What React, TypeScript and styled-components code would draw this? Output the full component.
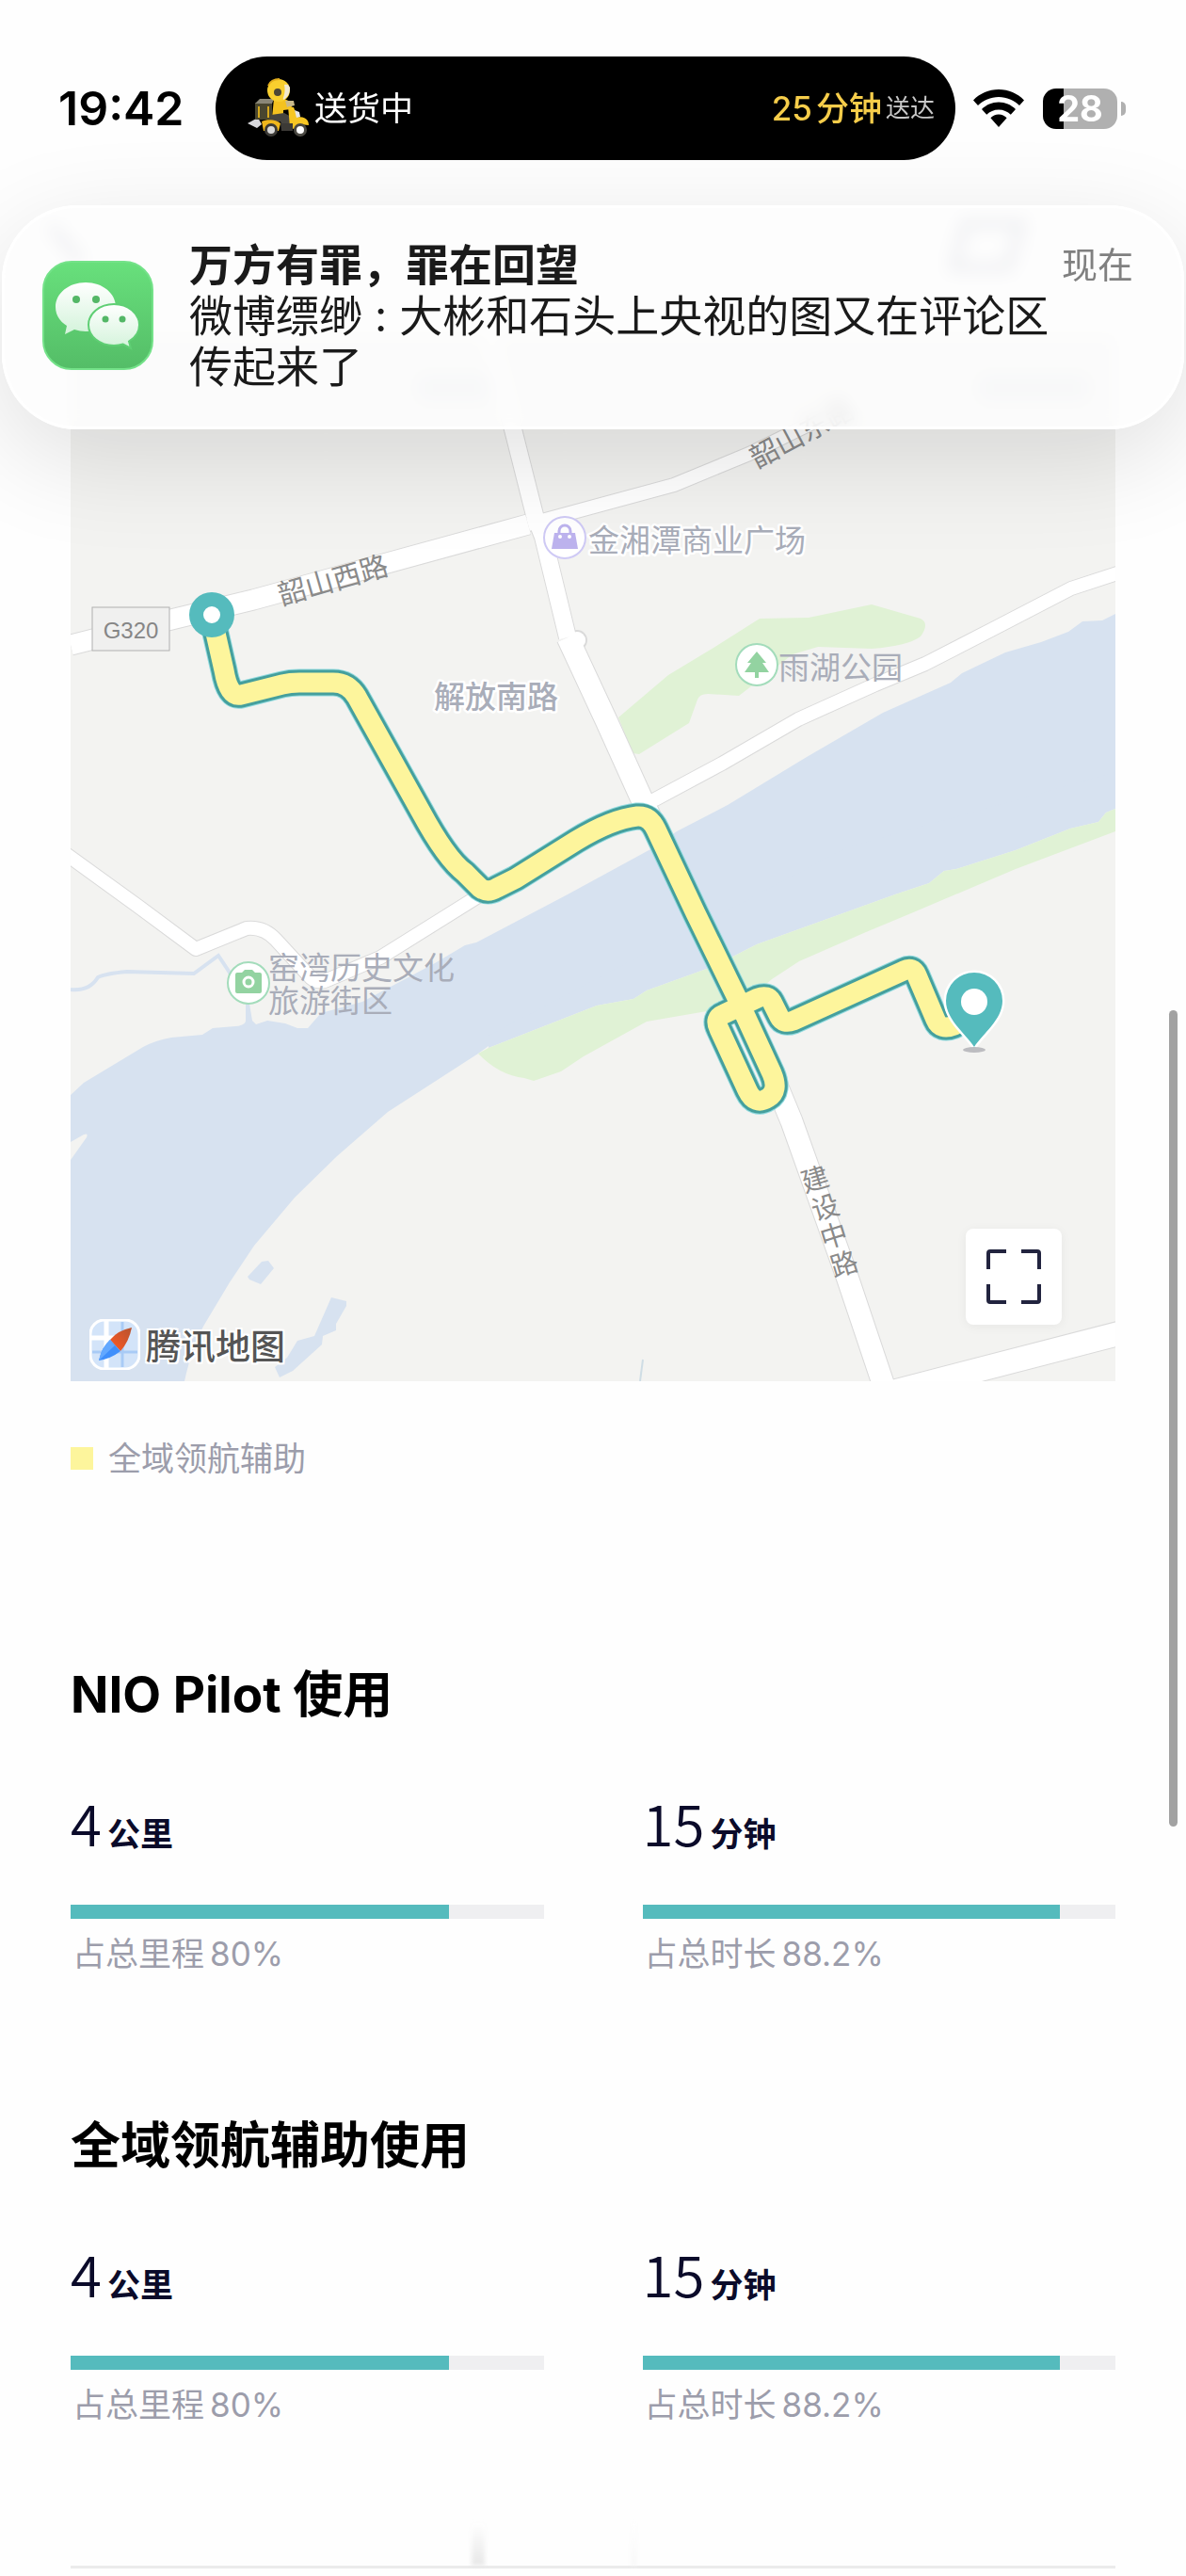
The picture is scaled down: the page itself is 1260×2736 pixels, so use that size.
import React from "react";
import styled, { createGlobalStyle } from "styled-components";

const latin = `Inter, "Noto Sans CJK SC", sans-serif`;
const han = `"Noto Sans CJK SC", sans-serif`;

const GlobalStyle = createGlobalStyle`
  * { box-sizing: border-box; }
  body { margin: 0; background: #fefefe; font-family: ${latin}; color: #000; }
  h1, h2, p { margin: 0; }
`;

const Screen = styled.div`
  position: relative;
  min-height: 100vh;
  display: flex;
  flex-direction: column;
  overflow: hidden;
  background: #fefefe;
`;

/* ---------- status bar ---------- */

const StatusBar = styled.header`
  position: relative;
  z-index: 3;
  height: 230px;
  padding: 0 64px 0 62px;
  display: flex;
  align-items: center;
`;

const Clock = styled.time`
  width: 167px;
  flex: none;
  font-size: 50px;
  line-height: 60px;
  font-weight: 600;
`;

const Island = styled.div`
  flex: 1;
  height: 110px;
  padding: 0 22px 0 33px;
  border-radius: 55px;
  background: #000;
  display: flex;
  align-items: center;
  font-size: 35px;
  line-height: 40px;
  color: #fff;
`;

const IslandLabel = styled.span`
  margin-left: 4px;
  flex: 1;
`;

const Eta = styled.span`
  display: flex;
  align-items: center;
  gap: 4px;
  font-weight: 500;
  color: #f6cd4a;
`;

const EtaNote = styled.span`
  font-size: 26px;
  font-weight: 400;
  color: #c8c8c8;
`;

const StatusIcons = styled.div`
  margin-left: 19px;
  display: flex;
  align-items: center;
  gap: 20px;
`;

const Battery = styled.div`
  display: flex;
  align-items: center;
  gap: 4px;
`;

const BatteryBody = styled.div`
  width: 79px;
  height: 43px;
  border-radius: 14px;
  background: linear-gradient(90deg, #000 0 22px, #b0b0b0 22px);
  color: #fff;
  font-size: 38px;
  line-height: 43px;
  font-weight: 700;
  text-align: center;
`;

const BatteryTip = styled.div`
  width: 5px;
  height: 15px;
  border-radius: 0 8px 8px 0;
  background: #b0b0b0;
`;

/* ---------- page bar behind the banner ---------- */

const PageBar = styled.div`
  height: 127px;
  padding: 0 165px 0 48px;
  display: flex;
  justify-content: space-between;
  align-items: flex-start;
`;

/* ---------- notification ---------- */

const Banner = styled.aside`
  position: absolute;
  z-index: 2;
  top: 218px;
  left: 2px;
  right: 2px;
  padding: 33px 51px 37px 40px;
  display: flex;
  align-items: center;
  gap: 38px;
  border: 3px solid #fff;
  border-radius: 80px;
  background: rgba(252, 252, 252, 0.82);
  backdrop-filter: blur(9px);
  box-shadow: 0 30px 110px rgba(0, 0, 0, 0.12);
  color: #1a1a1a;
  font-size: 46px;
  line-height: 54px;
`;

const BannerText = styled.div`
  flex: 1;
`;

const BannerHead = styled.div`
  height: 54px;
  display: flex;
  justify-content: space-between;
  align-items: center;
`;

const BannerTitle = styled.h1`
  font-size: 46px;
  line-height: 54px;
  font-weight: 600;
`;

const BannerTime = styled.time`
  font-size: 38px;
  color: #808080;
`;

const BannerBody = styled.p`
  height: 108px;
  padding-right: 60px;
`;

/* ---------- content ---------- */

const Content = styled.main`
  padding: 0 75px 8px;
`;

const MapBox = styled.div`
  position: relative;
  aspect-ratio: 1;
  overflow: hidden;
`;

const MapSvg = styled.svg`
  display: block;
  width: 100%;
  height: 100%;
  background: #f3f3f1;
  font-family: ${han};
`;

const MapBrand = styled.div`
  position: absolute;
  left: 20px;
  bottom: 12px;
  display: flex;
  align-items: center;
  gap: 6px;
  font-family: ${han};
  font-size: 37px;
  line-height: 54px;
  font-weight: 500;
  color: #555;
  text-shadow: 2px 0 #fff, -2px 0 #fff, 0 2px #fff, 0 -2px #fff, 2px 2px #fff, -2px -2px #fff, 2px -2px #fff, -2px 2px #fff;
`;

const ExpandButton = styled.button`
  position: absolute;
  right: 57px;
  bottom: 60px;
  width: 102px;
  height: 102px;
  padding: 0;
  display: grid;
  place-items: center;
  border: 0;
  border-radius: 8px;
  background: #fff;
  box-shadow: 0 2px 12px rgba(0, 0, 0, 0.05);
`;

const Legend = styled.div`
  margin-top: 62px;
  display: flex;
  align-items: center;
  gap: 16px;
  font-size: 35px;
  line-height: 40px;
  color: #9c9dab;
`;

const Swatch = styled.span`
  width: 24px;
  height: 24px;
  background: #fdf59c;
`;

const Section = styled.section<{ $gap: number }>`
  margin-top: ${(p) => p.$gap}px;
`;

const SectionTitle = styled.h2`
  height: 60px;
  font-size: 53px;
  line-height: 62px;
  font-weight: 700;
`;

const Stats = styled.div`
  margin-top: 76px;
  display: grid;
  grid-template-columns: 1fr 1fr;
  column-gap: 105px;
`;

const Value = styled.div`
  height: 60px;
  display: flex;
  align-items: baseline;
  gap: 6px;
  font-family: ${han};
  line-height: 60px;
  color: #0b0b2a;
`;

const Amount = styled.span`
  font-size: 60px;
  font-weight: 350;
`;

const Unit = styled.span`
  font-size: 35px;
  font-weight: 700;
`;

const Track = styled.div`
  height: 15px;
  margin: 58px 0 16px;
  background: #efeff1;
`;

const Fill = styled.div`
  height: 100%;
  background: #55bbbd;
`;

const Caption = styled.p`
  height: 40px;
  padding-left: 2px;
  display: flex;
  gap: 6px;
  font-size: 35px;
  line-height: 42px;
  color: #9c9dab;
`;

const NextCard = styled.div`
  margin-top: 107px;
  height: 48px;
  padding-left: 426px;
  display: flex;
  gap: 156px;
  border-bottom: 3px solid #ebebeb;
`;

const Streak = styled.span<{ $w: number; $c: string }>`
  width: ${(p) => p.$w}px;
  background: linear-gradient(#fefefe, ${(p) => p.$c});
  filter: blur(2px);
`;

const ScrollThumb = styled.div`
  position: absolute;
  z-index: 1;
  top: 1073px;
  right: 9px;
  width: 9px;
  height: 867px;
  border-radius: 5px;
  background: #a2a2a2;
`;

/* ---------- icons ---------- */

const Rider = () => (
  <svg width="68" height="64" viewBox="0 0 68 64" aria-hidden="true">
    <path d="M1 48l11-6 4 7-5 4z" fill="#d8d8dc" />
    <rect x="9" y="26" width="18" height="18" rx="1" fill="#49462f" />
    <path d="M10 26l4-4h15l-2 5H9z" fill="#8a8778" />
    <path d="M13 30v12M23 30v12" stroke="#d5a91f" strokeWidth="2" />
    <path d="M29 22h11l9 4-2 7-8 1v8H27z" fill="#f4c21f" />
    <path d="M41 24h9l1 5-8 2z" fill="#c9b98a" />
    <path d="M26 39l14-2 9 5-2 10h-9l-2-6-12 2z" fill="#47453f" />
    <path d="M16 46c6-3 16-2 20 2l-2 8H18z" fill="#efb61c" />
    <path d="M44 30l6 1 4 10c8 0 12 3 12 9l-10-1-6 5-4-2z" fill="#f7c623" />
    <path d="M51 34l5 2 1 5-4 1z" fill="#e6e6e6" />
    <path d="M36 48h13v8H37z" fill="#3c3a36" />
    <circle cx="26" cy="55" r="7" fill="#3c3a36" />
    <circle cx="26" cy="55" r="4" fill="#d9d9d9" />
    <circle cx="57" cy="55" r="7" fill="#4a4842" />
    <circle cx="57" cy="55" r="4" fill="#fff" />
    <circle cx="34" cy="13" r="12" fill="#f9cf2e" />
    <path d="M40 7c3-1 5 0 6 3 0 7-3 11-7 13-1-3 3-6 1-16z" fill="#f2ead2" />
    <circle cx="33" cy="15" r="4" fill="#4c4636" />
    <path d="M23 8c2-5 7-7 12-7" stroke="#e2ad1d" strokeWidth="2" fill="none" />
  </svg>
);

const Wifi = () => (
  <svg width="54" height="40" viewBox="0 0 54 40" aria-hidden="true">
    <path d="M27 0C16.500 0 7 4.300 0 11.400l5 5.700C10.700 11.500 18.400 8 27 8s16.300 3.500 22 9.100l5-5.700C47 4.300 37.500 0 27 0z" />
    <path d="M27 13.500c-7 0-13.300 2.900-18 7.500l5.200 5.800c3.400-3.300 7.800-5.300 12.800-5.300s9.400 2 12.800 5.300L45 21c-4.700-4.600-11-7.500-18-7.500z" />
    <path d="M27 26.500c-3.400 0-6.400 1.500-8.600 3.800L27 40l8.600-9.700c-2.200-2.300-5.200-3.800-8.600-3.800z" />
  </svg>
);

const WeChat = () => (
  <svg width="118" height="116" viewBox="0 0 118 116" role="img" aria-label="微信">
    <defs>
      <linearGradient id="wg" x1="0" y1="0" x2="0" y2="1">
        <stop offset="0" stopColor="#68e07c" />
        <stop offset="1" stopColor="#54bd67" />
      </linearGradient>
      <linearGradient id="wb" x1="0" y1="0" x2="0" y2="1">
        <stop offset="0" stopColor="#ffffff" />
        <stop offset="1" stopColor="#d3f3da" />
      </linearGradient>
    </defs>
    <rect x="1" y="1" width="116" height="114" rx="30" fill="url(#wg)" stroke="#74e289" strokeWidth="2" />
    <path d="M46 23C28 23 14 34.500 14 49c0 8.500 4.500 15.500 12 20l-2 9 10-5c4 1.300 8 2 12 2 18 0 32-11.500 32-26S64 23 46 23z" fill="url(#wb)" />
    <path d="M76 46c-15 0-27 9.800-27 22s12 22 27 22c3.500 0 6.800-.5 9.800-1.500L94 93l-2-7.500c7-4 11-10.300 11-17.500 0-12.200-12-22-27-22z" fill="url(#wb)" stroke="#5fcf74" strokeWidth="2" />
    <g fill="#53b766">
      <circle cx="36" cy="41" r="4" />
      <circle cx="57" cy="41" r="4" />
      <circle cx="67" cy="62" r="3.500" />
      <circle cx="85" cy="62" r="3.500" />
    </g>
  </svg>
);

const Expand = () => (
  <svg width="58" height="58" viewBox="0 0 58 58" fill="none" stroke="#22243f" strokeWidth="4" aria-hidden="true">
    <path d="M2 21V4q0-2 2-2h17M37 2h17q2 0 2 2v17M56 37v17q0 2-2 2H37M21 56H4q-2 0-2-2V37" />
  </svg>
);

const BrandIcon = () => (
  <svg width="54" height="54" viewBox="0 0 54 54" aria-hidden="true">
    <defs>
      <linearGradient id="nr" x1="1" y1="0" x2="0" y2="1">
        <stop offset="0" stopColor="#b5532f" />
        <stop offset="1" stopColor="#ff5a24" />
      </linearGradient>
    </defs>
    <rect x="1" y="1" width="52" height="52" rx="15" fill="#d3e4f9" stroke="#fff" strokeWidth="3" />
    <path d="M18 2v50M2 20h25" stroke="#fff" strokeWidth="5" />
    <path d="M35 3v48M3 35h48" stroke="#a9cbf6" strokeWidth="3" />
    <path d="M45 9Q30 12 22 22l11 12Q42 24 45 9z" fill="url(#nr)" />
    <path d="M10 44Q13 30 22 22l11 12Q23 42 10 44z" fill="#3f8ffb" />
    <path d="M10 44Q13 30 22 22l5 6z" fill="#62a8ff" />
  </svg>
);

/* ---------- map ---------- */

const wide = "M75 685L186 657L269 637L561 557";
const wideEast = "M561 557L620 541L716 515L796 482L920 421";
const northSouth = "M520 357L568 547L577 570L603 677";
const bridge = "M603 677L643 763L681 847L739 970L785 1064L824 1150L841 1191L900 1356L941 1478";
const riverside = "M685 853L696 849L767 811L848 764L930 727L983 705L1055 668L1138 625L1190 608";
const oldTown = "M70 907L146 962L208 1008L262 986Q280 984 293 998L328 1036Q334 1044 345 1042L404 1017L508 952L542 935L628 887L681 860";
const southEast = "M935 1482L1190 1416";

const roads: [string, number][] = [
  [wideEast, 14],
  [oldTown, 14],
  [riverside, 14],
  [northSouth, 18],
  [wide, 21],
  [bridge, 23],
  [southEast, 25],
];

const route =
  "M228 668L238 712Q243 741 256 738L300 727Q308 725 318 725L354 725Q370 725 379 740L447 862Q474 912 494 927L510 943Q518 949 528 943L548 933L612 893Q650 870 677 867Q690 866 697 881L739 970L785 1064L820 1140Q828 1159 816 1166Q802 1175 794 1158L764 1093Q758 1081 769 1077L805 1060Q816 1056 820 1064L828 1080Q832 1088 843 1084L960 1031Q970 1026 974 1036L994 1083Q999 1095 1014 1089";

const water =
  "M1185 652L1171 659L1150 660L1135 671L1106 682L1068 693L1022 715L1010 725L938 757L857 804L773 855L719 883L693 901L603 950L506 1001L494 1004L462 1023L385 1064L341 1076L327 1092L316 1092L303 1087L284 1084L272 1088L268 1084L264 1060L261 1060L261 1084Q261 1089 250 1090L226 1092L215 1099L182 1102Q165 1105 152 1112L89 1150L75 1163V1213L89 1205Q94 1203 92 1208L75 1232V1467H196Q204 1430 217 1407L244 1362L270 1323L313 1272L358 1228L412 1181L508 1119L534 1100L640 1060L673 1040L700 1030L804 990L951 935L1003 915L1137 870L1185 855Z";

const southBank =
  "M508 1119L519 1113L634 1068L673 1061L687 1052L759 1026L804 1003L951 950L987 938L1003 925L1016 923L1079 903L1137 880L1167 873L1175 863L1185 859V883L1079 923L968 970L920 990L849 1021L820 1040L790 1066L751 1074L687 1085L620 1122L596 1138L567 1148L557 1145Q530 1142 508 1119Z";

/* strip of river between the channel outline and the planted bank */
const channelEdge =
  "M519 1100V1113L634 1068L673 1061L687 1052L759 1026L804 1003L951 950L987 938L1003 925L1016 923L1079 903L1137 880L1167 873L1175 863L1185 859V820L900 900Z";

const park =
  "M657 762L710 717L758 688L807 657L859 656L926 642L978 657Q988 662 978 676Q965 686 926 689L869 687L842 695L785 739L752 737Q743 737 741 743L732 768L679 801L672 800Z";

const streetDown: [string, number, number][] = [
  ["建", 866, 1253],
  ["设", 877, 1283],
  ["中", 886, 1313],
  ["路", 897, 1343],
];

const halo = { stroke: "#fff", strokeWidth: 5, paintOrder: "stroke", strokeLinejoin: "round" } as const;

const RouteMap = () => (
  <MapSvg viewBox="75 357 1110 1110" role="img" aria-label="行程地图">
    <path d={water} fill="#d7e2f0" />
    <path d={channelEdge} fill="#d7e2f0" />
    <path d={southBank} fill="#e0f2d5" />
    <path d={park} fill="#e0f2d5" />
    <path d="M75 1051Q95 1053 104 1038Q112 1034 135 1032L206 1034L232 1015L242 1030L262 1062" fill="none" stroke="#d7e2f0" strokeWidth="4" />
    <path d="M263 1356L278 1340L285 1339L291 1347L277 1364L265 1359Z" fill="#d7e2f0" />
    <path d="M352 1378L368 1382V1387L357 1406V1413L343 1419L342 1428L311 1456L297 1463L292 1452L305 1442L316 1424L334 1419Z" fill="#d7e2f0" />
    <path d="M683 1444L680 1467" stroke="#cfdde5" strokeWidth="2" />

    <g fill="none" stroke="#dadada" strokeLinejoin="round">
      {roads.map(([d, w]) => (
        <path key={d} d={d} strokeWidth={w + 2} />
      ))}
      <circle cx="613" cy="680" r="10" strokeWidth="2" />
    </g>
    <g fill="none" stroke="#fff" strokeLinejoin="round">
      {roads.map(([d, w]) => (
        <path key={d} d={d} strokeWidth={w} />
      ))}
      <circle cx="613" cy="680" r="9" fill="#fff" stroke="none" />
    </g>

    <g fill="none" strokeLinejoin="round" strokeLinecap="round">
      <path d={route} stroke="#8fd9de" strokeWidth="29" />
      <path d={route} stroke="#459f9d" strokeWidth="27" />
      <path d={route} stroke="#fdf59c" strokeWidth="21" />
    </g>

    <circle cx="225" cy="653" r="24" fill="#55bbbd" />
    <circle cx="225" cy="653" r="9" fill="#fff" />

    <path d="M1035 1112C1026 1098 1005 1083 1005 1063a30 30 0 0 1 60 0C1065 1083 1044 1098 1035 1112Z" fill="#fff" stroke="#fff" strokeWidth="5" strokeLinejoin="round" />
    <ellipse cx="1035" cy="1115" rx="12" ry="3" fill="#bcbcc0" />
    <path d="M1035 1112C1026 1098 1005 1083 1005 1063a30 30 0 0 1 60 0C1065 1083 1044 1098 1035 1112Z" fill="#55bbbd" />
    <circle cx="1035" cy="1064" r="14" fill="#fff" />

    <rect x="98" y="645" width="82" height="46" fill="#f0f0ef" stroke="#b0b0b0" />
    <text x="139" y="678" textAnchor="middle" fontSize="24" fontFamily="Liberation Sans, sans-serif" fill="#868686">G320</text>

    <g fontSize="30" fill="#8a8a8a">
      <text transform="translate(299 643) rotate(-16)">韶山西路</text>
      <text transform="translate(804 498) rotate(-28)">韶山东路</text>
    </g>
    <g fontSize="29" fill="#8a8a8a" textAnchor="middle">
      {streetDown.map(([c, x, y]) => (
        <text key={c} transform={`translate(${x} ${y}) rotate(-17)`} y="10">{c}</text>
      ))}
    </g>

    <g fontSize="33" fill="#a9adb9" {...halo}>
      <text x="625" y="586">金湘潭商业广场</text>
      <text x="461" y="752" fontWeight="500">解放南路</text>
    </g>
    <g fontSize="33" fill="#a9adb9">
      <text x="827" y="721">雨湖公园</text>
      <text x="285" y="1040">窑湾历史文化</text>
      <text x="285" y="1075">旅游街区</text>
    </g>

    <g>
      <circle cx="600" cy="571" r="22" fill="#fff" stroke="#cfcaf5" strokeWidth="2" />
      <path d="M589 566h22l3 17h-28z" fill="#bdb3ee" />
      <path d="M594 567v-3a6 6 0 0 1 12 0v3" fill="none" stroke="#bdb3ee" strokeWidth="3" />
      <circle cx="595" cy="570" r="2" fill="#fff" />
      <circle cx="605" cy="570" r="2" fill="#fff" />
    </g>
    <g>
      <circle cx="804" cy="706" r="22" fill="#fff" stroke="#a3dcbb" strokeWidth="2" />
      <path d="M804 692l10 12h-4l7 10h-11v6h-4v-6h-11l7-10h-4z" fill="#93d3a1" />
    </g>
    <g>
      <circle cx="264" cy="1044" r="22" fill="#fff" stroke="#a3dcbb" strokeWidth="2" />
      <path d="M252 1033h5l3-3h8l3 3h5q2 0 2 2v18q0 2-2 2h-24q-2 0-2-2v-18q0-2 2-2z" fill="#93d3a1" />
      <circle cx="264" cy="1043" r="5" fill="none" stroke="#fff" strokeWidth="3" />
    </g>

    <g fill="#dfe2e8">
      <rect x="444" y="398" width="76" height="28" />
      <rect x="1040" y="398" width="116" height="28" />
    </g>
  </MapSvg>
);

/* ---------- usage statistics ---------- */

type Stat = { amount: string; unit: string; label: string; percent: number };

const usage: Stat[] = [
  { amount: "4", unit: "公里", label: "占总里程", percent: 80 },
  { amount: "15", unit: "分钟", label: "占总时长", percent: 88.2 },
];

const Usage = ({ title, gap }: { title: string; gap: number }) => (
  <Section $gap={gap}>
    <SectionTitle>{title}</SectionTitle>
    <Stats>
      {usage.map((s) => (
        <div key={s.unit}>
          <Value>
            <Amount>{s.amount}</Amount>
            <Unit>{s.unit}</Unit>
          </Value>
          <Track role="progressbar" aria-label={s.label} aria-valuenow={s.percent}>
            <Fill style={{ width: `${s.percent}%` }} />
          </Track>
          <Caption>
            <span>{s.label}</span>
            <span>{s.percent}%</span>
          </Caption>
        </div>
      ))}
    </Stats>
  </Section>
);

export default function App() {
  return (
    <>
      <GlobalStyle />
      <Screen>
        <StatusBar>
          <Clock>19:42</Clock>
          <Island>
            <Rider />
            <IslandLabel>送货中</IslandLabel>
            <Eta>
              <span>25</span>
              <span>分钟</span>
              <EtaNote>送达</EtaNote>
            </Eta>
          </Island>
          <StatusIcons>
            <Wifi />
            <Battery>
              <BatteryBody>28</BatteryBody>
              <BatteryTip />
            </Battery>
          </StatusIcons>
        </StatusBar>

        <PageBar aria-hidden="true">
          <svg width="44" height="60" viewBox="0 0 44 60" fill="none" stroke="#a0a3b5" strokeWidth="8">
            <path d="M6 10l32 38" />
          </svg>
          <svg width="90" height="62" viewBox="0 0 90 62" fill="none" stroke="#a0a3b5" strokeWidth="8">
            <path d="M20 8h60L66 54H8z" />
          </svg>
        </PageBar>

        <Banner>
          <WeChat />
          <BannerText>
            <BannerHead>
              <BannerTitle>万方有罪，罪在回望</BannerTitle>
              <BannerTime>现在</BannerTime>
            </BannerHead>
            <BannerBody>微博缥缈 : 大彬和石头上央视的图又在评论区传起来了</BannerBody>
          </BannerText>
        </Banner>

        <Content>
          <MapBox>
            <RouteMap />
            <MapBrand>
              <BrandIcon />
              <span>腾讯地图</span>
            </MapBrand>
            <ExpandButton type="button" aria-label="全屏查看地图">
              <Expand />
            </ExpandButton>
          </MapBox>
          <Legend>
            <Swatch />
            <span>全域领航辅助</span>
          </Legend>
          <Usage title="NIO Pilot 使用" gap={200} />
          <Usage title="全域领航辅助使用" gap={154} />
          <NextCard aria-hidden="true">
            <Streak $w={14} $c="#e8e8e8" />
            <Streak $w={5} $c="#f6f6f6" />
          </NextCard>
        </Content>
        <ScrollThumb />
      </Screen>
    </>
  );
}
